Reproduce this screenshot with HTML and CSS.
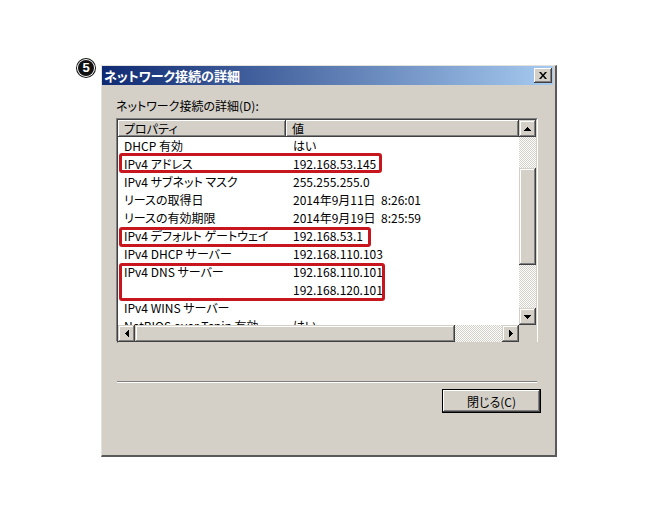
FILE: index.html
```html
<!DOCTYPE html>
<html lang="ja">
<head>
<meta charset="UTF-8">
<title>ネットワーク接続の詳細</title>
<link rel="stylesheet" href="styles.css">
</head>
<body>
<div class="page">
  <span class="step">5</span>
  <div class="dialog">
    <div class="titlebar">
      <span class="title">ネットワーク接続の詳細</span>
      <button class="close-btn" aria-label="閉じる">
        <svg width="8" height="7" viewBox="0 0 8 7"><path d="M0 0h2l2 2.4L6 0h2L5 3.5 8 7H6L4 4.6 2 7H0l3-3.5z" fill="#000"/></svg>
      </button>
    </div>
    <div class="dialog-body">
      <div class="label">ネットワーク接続の詳細(D):</div>
      <div class="listview">
        <div class="list-inner">
          <div class="list-main">
            <div class="list-head">
              <div class="col-prop">プロパティ</div>
              <div class="col-val">値</div>
            </div>
            <div class="row"><span class="prop">DHCP 有効</span><span class="val">はい</span></div>
            <div class="row"><span class="prop">IPv4 アドレス</span><span class="val">192.168.53.145</span></div>
            <div class="row"><span class="prop">IPv4 サブネット マスク</span><span class="val">255.255.255.0</span></div>
            <div class="row"><span class="prop">リースの取得日</span><span class="val">2014年9月11日  8:26:01</span></div>
            <div class="row"><span class="prop">リースの有効期限</span><span class="val">2014年9月19日  8:25:59</span></div>
            <div class="row"><span class="prop">IPv4 デフォルト ゲートウェイ</span><span class="val">192.168.53.1</span></div>
            <div class="row"><span class="prop">IPv4 DHCP サーバー</span><span class="val">192.168.110.103</span></div>
            <div class="row"><span class="prop">IPv4 DNS サーバー</span><span class="val">192.168.110.101</span></div>
            <div class="row"><span class="prop"></span><span class="val">192.168.120.101</span></div>
            <div class="row"><span class="prop">IPv4 WINS サーバー</span><span class="val"></span></div>
            <div class="row"><span class="prop">NetBIOS over Tcpip 有効</span><span class="val">はい</span></div>

            <div class="mark mark-addr"></div>
            <div class="mark mark-gw"></div>
            <div class="mark mark-dns"></div>
          </div>

          <div class="vscroll">
            <div class="sb-btn"><svg width="7" height="4" viewBox="0 0 7 4"><path d="M3 0h1v1h1v1h1v1h1v1H0V3h1V2h1V1h1z"/></svg></div>
            <div class="sb-track sb-track-top"></div>
            <div class="sb-thumb sb-thumb-v"></div>
            <div class="sb-track sb-track-fill"></div>
            <div class="sb-btn"><svg width="7" height="4" viewBox="0 0 7 4"><path d="M0 0h7v1H6v1H5v1H4v1H3V3H2V2H1V1H0z"/></svg></div>
          </div>

          <div class="hscroll">
            <div class="sb-btn"><svg width="4" height="7" viewBox="0 0 4 7"><path d="M3 0h1v7H3V6H2V5H1V4H0V3h1V2h1V1h1z"/></svg></div>
            <div class="sb-thumb sb-thumb-h"></div>
            <div class="sb-track sb-track-fill"></div>
            <div class="sb-btn"><svg width="4" height="7" viewBox="0 0 4 7"><path d="M0 0h1v1h1v1h1v1h1v1H3v1H2v1H1v1H0z"/></svg></div>
          </div>

          <div class="corner"></div>
        </div>
      </div>

      <div class="separator"></div>

      <div class="button-row">
        <button class="push-btn">閉じる(C)</button>
      </div>
    </div>
  </div>
</div>
</body>
</html>
```

FILE: styles.css
```css
body {
  margin: 0;
  background-color: #fff;
  font-family: "Noto Sans CJK JP", sans-serif;
  font-size: 12px;
  font-feature-settings: "palt";
  color: #000;
}

.page {
  display: flex;
  align-items: flex-start;
  padding: 60px 0 0 78px;
}

.step {
  width: 16px;
  height: 16px;
  margin-right: 7px;
  border-radius: 50%;
  background-color: #111;
  box-shadow: 0 0 0 1px #fff, 0 0 0 2px #111;
  color: #fff;
  font: bold 13px/16px "Liberation Sans", sans-serif;
  text-align: center;
}

.dialog {
  box-sizing: border-box;
  width: 456px;
  height: 392px;
  margin-top: 5px;
  padding-right: 2px;
  background-color: #d4d0c8;
  border-left: 1px solid #e4e2dc;
  border-top: 1px solid #e4e2dc;
  border-right: 2px solid #5a5a5a;
  border-bottom: 2px solid #5a5a5a;
}

.titlebar {
  display: flex;
  align-items: center;
  justify-content: space-between;
  height: 19px;
  padding: 0 1px 0 2px;
  background: linear-gradient(to right, #0f2a72, #a6caf0);
}

.title {
  color: #fff;
  font-weight: bold;
  font-size: 13px;
  line-height: 19px;
}

.close-btn {
  display: flex;
  align-items: center;
  justify-content: center;
  width: 18px;
  height: 15px;
  padding: 0;
  border: none;
  background-color: #d4d0c8;
  box-shadow: inset -1px -1px #404040, inset 1px 1px #fff, inset -2px -2px #808080;
}

.dialog-body {
  padding: 14px 0 0 14px;
}

.label {
  line-height: 14px;
  margin-bottom: 5px;
}

.listview {
  box-sizing: border-box;
  width: 422px;
  height: 224px;
  border: 1px solid;
  border-color: #808080 #fff #fff #808080;
}

.list-inner {
  display: grid;
  grid-template-columns: 1fr 17px;
  grid-template-rows: 1fr 17px;
  height: 100%;
  border: 1px solid;
  border-color: #404040 #d4d0c8 #d4d0c8 #404040;
  background-color: #fff;
}

.list-main {
  position: relative;
  overflow: hidden;
}

.list-head {
  display: flex;
  height: 17px;
  line-height: 17px;
}

.list-head div {
  box-sizing: border-box;
  padding-left: 6px;
  background-color: #d4d0c8;
  box-shadow: inset -1px -1px #404040, inset 1px 1px #fff, inset -2px -2px #808080;
}

.col-prop {
  width: 168px;
}

.col-val {
  flex: 1;
}

.row {
  display: flex;
  height: 18px;
  line-height: 18px;
  white-space: pre;
}

.prop {
  width: 168px;
  padding-left: 6px;
  box-sizing: border-box;
}

.val {
  padding-left: 7px;
}

.mark {
  position: absolute;
  left: 1px;
  border: 3px solid #c8161e;
  border-radius: 3px;
  box-sizing: border-box;
}

.mark-addr {
  top: 33px;
  width: 263px;
  height: 20px;
}

.mark-gw {
  top: 107px;
  width: 252px;
  height: 20px;
}

.mark-dns {
  top: 143px;
  width: 266px;
  height: 38px;
}

.vscroll {
  display: flex;
  flex-direction: column;
}

.hscroll {
  display: flex;
}

.sb-btn {
  display: flex;
  align-items: center;
  justify-content: center;
  flex: 0 0 17px;
  width: 17px;
  height: 17px;
  background-color: #d4d0c8;
  box-shadow: inset -1px -1px #404040, inset 1px 1px #d4d0c8, inset -2px -2px #808080, inset 2px 2px #fff;
}

.sb-thumb {
  background-color: #d4d0c8;
  box-shadow: inset -1px -1px #404040, inset 1px 1px #d4d0c8, inset -2px -2px #808080, inset 2px 2px #fff;
}

.sb-thumb-v {
  flex: 0 0 97px;
}

.sb-thumb-h {
  flex: 0 0 320px;
}

.sb-track {
  background: repeating-conic-gradient(#fff 0 25%, #d4d0c8 0 50%) 0 0 / 2px 2px;
}

.sb-track-top {
  flex: 0 0 31px;
}

.sb-track-fill {
  flex: 1;
}

.corner {
  background-color: #d4d0c8;
}

.separator {
  width: 420px;
  margin: 39px 0 0 1px;
  border-top: 1px solid #808080;
  border-bottom: 1px solid #fff;
}

.button-row {
  display: flex;
  justify-content: flex-end;
  width: 425px;
  margin-top: 6px;
}

.push-btn {
  width: 99px;
  height: 24px;
  padding: 0;
  border: 1px solid #000;
  background-color: #d4d0c8;
  box-shadow: inset -1px -1px #404040, inset 1px 1px #fff, inset -2px -2px #808080;
  font-family: "Noto Sans CJK JP", sans-serif;
  font-size: 12px;
  font-feature-settings: "palt";
  color: #000;
}
```
